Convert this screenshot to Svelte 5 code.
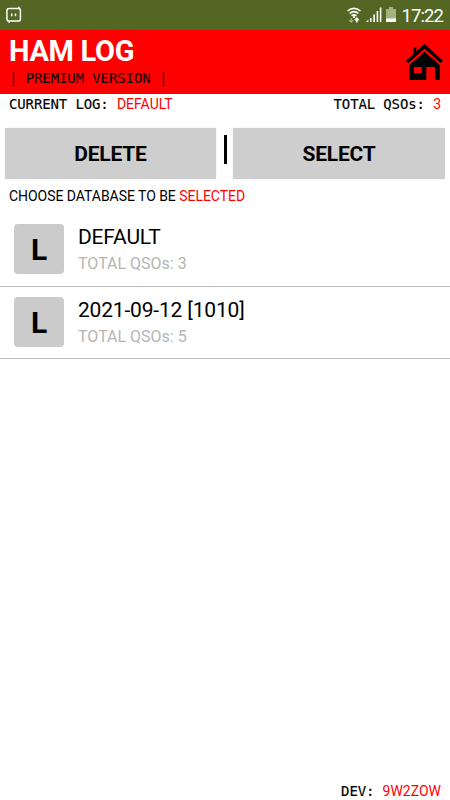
<script>
  let currentLog = "DEFAULT";
  let databases = [
    { name: "DEFAULT", total: 3 },
    { name: "2021-09-12 [1010]", total: 5 },
  ];
  let selected = databases[0];

  function choose(db) {
    selected = db;
    currentLog = db.name;
  }
</script>

<div class="screen">
  <div class="status">
    <svg class="cast" width="16" height="18" viewBox="0 0 16 18" fill="none" stroke="#fff" stroke-width="1.5">
      <path d="M12.8 .8v1.6M3.2 15.2v1.9M14.3 2.6H3.2Q.9 2.6.9 4.8v7.8M1.3 15.1h11Q14.4 15.1 14.4 13V4.4M12.8 2.4q1.6 0 1.6 2M.9 12.6q0 2.5 2.3 2.5" />
      <path d="M5.7 7.4v2.8M9.5 7.4v2.8" />
    </svg>
    <div class="indicators">
      <svg width="14" height="17" viewBox="0 0 14 17" fill="none" stroke="#fff" stroke-width="1.6">
        <path d="M.5 4Q7-1.3 13.5 4M2.6 6.5Q7 2.7 11.4 6.5M4.6 8.8Q7 6.8 9.4 8.8" />
        <path d="M7 9.2v1.7" stroke-width="2" />
        <path d="M4.2 11v4M2.4 13.2l1.8 2 1.8-2" stroke="#a8b38b" stroke-width="1.2" />
        <path d="M9.8 15.5v-4M8 13.2l1.8-2 1.8 2" stroke-width="1.6" />
      </svg>
      <svg class="signal" width="16" height="16" viewBox="0 0 16 16" fill="#fff">
        <path d="M0 15l2.4-2.4V15zM4 11h1.6v4H4zM7.3 7.5h1.6V15H7.3zM10.6 4h1.6v11h-1.6zM13.8 .5h1.6V15h-1.6z" />
      </svg>
      <svg class="battery" width="10" height="16" viewBox="0 0 10 16">
        <path d="M3 0h4v2h3v13H0V2h3z" fill="#a6b184" />
        <path d="M0 11.5h10V15H0z" fill="#fff" />
      </svg>
      <span class="clock">17:22</span>
    </div>
  </div>

  <header>
    <div>
      <h1>HAM LOG</h1>
      <p class="version">| PREMIUM VERSION |</p>
    </div>
    <button class="home" aria-label="Home">
      <svg width="38" height="38" viewBox="0 0 38 38">
        <path d="M19.5 0l6 5.5L38 16.7l-2.3 2.2L19.5 4.8 3.3 18.9 1 16.7l7.3-6.5V3.2h3v4.3z" />
        <path fill-rule="evenodd" d="M19.5 7.7L34.7 21v15H30V23h-8.7v13H4.4V21zM8.8 23v6.3h8V23z" />
      </svg>
    </button>
  </header>

  <div class="info">
    <span>CURRENT LOG: <b>{currentLog}</b></span>
    <span>TOTAL QSOs: <b>{selected.total}</b></span>
  </div>

  <div class="actions">
    <button>DELETE</button>
    <i></i>
    <button>SELECT</button>
  </div>

  <p class="hint">CHOOSE DATABASE TO BE <span>SELECTED</span></p>

  <div class="list">
    {#each databases as db}
      <button class="row" on:click={() => choose(db)}>
        <span class="thumb">L</span>
        <span class="text">
          <span class="name">{db.name}</span>
          <span class="total">TOTAL QSOs: {db.total}</span>
        </span>
      </button>
    {/each}
  </div>

  <footer>DEV: <b>9W2ZOW</b></footer>
</div>

<style>
  :global(body) {
    margin: 0;
    background: #fff;
  }
  .screen {
    display: flex;
    flex-direction: column;
    width: 450px;
    height: 800px;
    overflow: hidden;
    background: #fff;
    color: #000;
    font-family: Roboto, sans-serif;
  }
  button {
    border: none;
    padding: 0;
    margin: 0;
    color: #000;
    font-family: inherit;
    cursor: pointer;
  }
  svg {
    display: block;
  }
  .status {
    display: flex;
    align-items: center;
    justify-content: space-between;
    box-sizing: border-box;
    height: 30px;
    padding: 0 7px 0 6px;
    background: #536623;
  }
  .indicators {
    display: flex;
    align-items: center;
    color: #fff;
  }
  .signal {
    margin-left: 5px;
  }
  .battery {
    margin-left: 4px;
  }
  .clock {
    margin-left: 5px;
    font-size: 18.5px;
    line-height: 30px;
    letter-spacing: -0.9px;
    transform: translateY(1px);
  }
  header {
    display: flex;
    justify-content: space-between;
    box-sizing: border-box;
    height: 64px;
    padding: 0 7px 0 9px;
    background: #f00;
  }
  h1 {
    margin: 4px 0 0;
    color: #fff;
    font-size: 29px;
    font-weight: 700;
    letter-spacing: -0.3px;
    line-height: 34px;
  }
  .version {
    margin: 2px 0 0;
    font-family: "DejaVu Sans Mono", monospace;
    font-size: 14px;
    letter-spacing: -0.1px;
    line-height: 16px;
  }
  .home {
    align-self: flex-start;
    margin-top: 14px;
    background: none;
  }
  .info {
    display: flex;
    justify-content: space-between;
    height: 20px;
    padding: 0 9px;
    line-height: 20px;
  }
  .info,
  footer {
    font-family: "DejaVu Sans Mono", monospace;
    font-size: 14px;
    letter-spacing: -0.13px;
    white-space: pre;
    -webkit-text-stroke: 0.15px #000;
  }
  b {
    color: #f00;
    font-family: Roboto, sans-serif;
    font-weight: 400;
    letter-spacing: 0;
    -webkit-text-stroke: 0;
  }
  .actions {
    display: flex;
    height: 51px;
    margin: 14px 5px 0;
  }
  .actions button {
    width: 211px;
    border-radius: 1px;
    background: #cecece;
    box-shadow: 0 0 1px #bbb;
    font-size: 21px;
    font-weight: 700;
    letter-spacing: -0.2px;
  }
  .actions button:last-child {
    width: 212px;
  }
  .actions i {
    width: 3px;
    height: 29px;
    margin: 7px 6px 0 8px;
    background: #000;
  }
  .hint {
    margin: 7px 9px 0;
    font-size: 14px;
    letter-spacing: -0.04px;
    line-height: 20px;
  }
  .hint span {
    color: #f00;
  }
  .list {
    margin-top: 8px;
  }
  .row {
    display: flex;
    align-items: flex-start;
    box-sizing: border-box;
    width: 100%;
    height: 72.5px;
    padding: 10px 14px 0;
    border-bottom: 1px solid #bdbdbd;
    background: #fff;
    text-align: left;
  }
  .thumb {
    width: 50px;
    height: 50px;
    margin-right: 14px;
    border-radius: 4px;
    background: #cbcbcb;
    font-size: 30px;
    font-weight: 700;
    line-height: 52px;
    text-align: center;
  }
  .text {
    display: flex;
    flex-direction: column;
  }
  .name {
    font-size: 21px;
    letter-spacing: -0.18px;
    line-height: 26px;
  }
  .total {
    color: #b5b5b5;
    font-size: 16px;
    line-height: 28px;
  }
  footer {
    margin-top: auto;
    padding-right: 9px;
    line-height: 18px;
    text-align: right;
  }
</style>
